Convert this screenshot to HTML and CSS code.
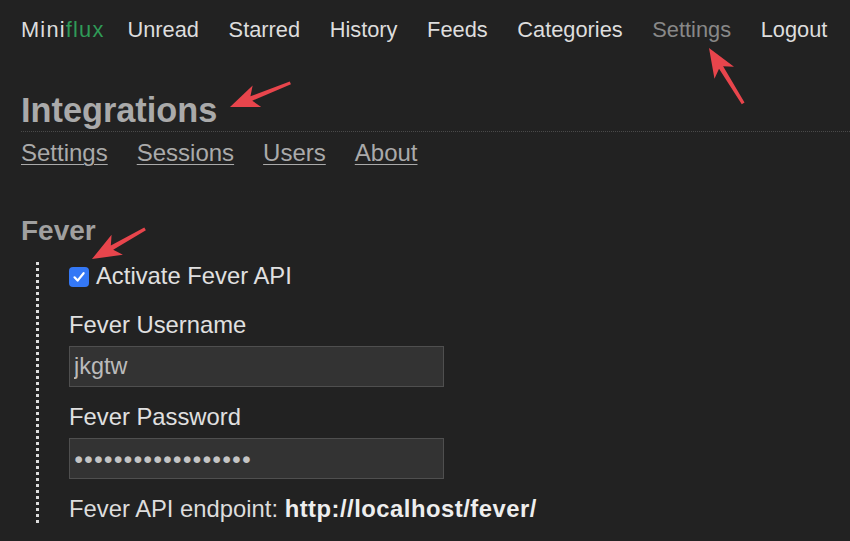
FILE: index.html
```html
<!DOCTYPE html>
<html lang="en">
<head>
<meta charset="utf-8">
<title>Integrations - Miniflux</title>
<link rel="stylesheet" href="styles.css">
</head>
<body>
<header class="top-nav">
  <a class="logo" href="#">Mini<span class="logo-flux">flux</span></a>
  <a class="nav-link" href="#">Unread</a>
  <a class="nav-link" href="#">Starred</a>
  <a class="nav-link" href="#">History</a>
  <a class="nav-link" href="#">Feeds</a>
  <a class="nav-link" href="#">Categories</a>
  <a class="nav-link active" href="#">Settings</a>
  <a class="nav-link" href="#">Logout</a>
</header>

<section class="page-header">
  <h1 class="page-title">Integrations</h1>
</section>
<nav class="sub-nav">
  <a href="#">Settings</a>
  <a href="#">Sessions</a>
  <a href="#">Users</a>
  <a href="#">About</a>
</nav>

<h3 class="section-title">Fever</h3>
<div class="fieldset">
  <label class="check-row">
    <span class="checkbox"><svg viewBox="0 0 20 20" width="20" height="20"><path d="M5.5 10.3 L8.6 13.6 L14.6 6.2" fill="none" stroke="#fff" stroke-width="2.2" stroke-linecap="round" stroke-linejoin="round"/></svg></span>
    <span>Activate Fever API</span>
  </label>
  <label class="field-label" for="fu">Fever Username</label>
  <input class="field-input" id="fu" type="text" value="jkgtw">
  <label class="field-label" for="fp">Fever Password</label>
  <div class="field-input password" id="fp">●●●●●●●●●●●●●●●●●●</div>
  <p class="endpoint">Fever API endpoint: <strong>http://localhost/fever/</strong></p>
</div>

<svg class="annotations" width="850" height="541" viewBox="0 0 850 541">
  <g transform="translate(709 48) rotate(-121.7)">
    <polygon points="0,0 -29,-11.5 -23,-2.4 -65,-1.6 -65,1.6 -23,2.4 -29,11.5" fill="#e8454c"/>
  </g>
  <g transform="translate(230 107) rotate(158.2)">
    <polygon points="0,0 -29,-11.5 -23,-2.4 -65,-1.6 -65,1.6 -23,2.4 -29,11.5" fill="#e8454c"/>
  </g>
  <g transform="translate(92 259) rotate(150.5)">
    <polygon points="0,0 -29,-11.5 -23,-2.4 -61,-1.6 -61,1.6 -23,2.4 -29,11.5" fill="#e8454c"/>
  </g>
</svg>
</body>
</html>
```

FILE: styles.css
```css
html, body {
  margin: 0;
  padding: 0;
}
body {
  background: #222;
  color: #ddd;
  font-family: "Liberation Sans", Arial, Helvetica, sans-serif;
  padding-left: 21px;
  height: 541px;
  overflow: hidden;
  position: relative;
}
a {
  text-decoration: none;
}

.top-nav {
  display: flex;
  align-items: baseline;
  padding-top: 17px;
  font-size: 21.8px;
  line-height: 26px;
  height: 26px;
}
.logo {
  color: #ddd;
  letter-spacing: 1.2px;
  margin-right: 23px;
}
.logo-flux {
  color: #2f9b57;
}
.nav-link {
  color: #ddd;
  margin-right: 29.6px;
}
.nav-link.active {
  color: #888;
}

.page-header {
  margin-top: 47px;
  border-bottom: 1px dotted #4a4a4a;
}
.page-title {
  margin: 0;
  font-size: 34.3px;
  line-height: 40.8px;
  font-weight: bold;
  color: #aaa;
}

.sub-nav {
  margin-top: 7px;
  display: flex;
  font-size: 24px;
  line-height: 28px;
}
.sub-nav a {
  color: #aaa;
  text-decoration: underline;
  text-underline-offset: 3px;
  text-decoration-thickness: 1px;
  margin-right: 29px;
}

.section-title {
  margin: 47px 0 0;
  font-size: 28px;
  line-height: 33.6px;
  font-weight: bold;
  color: #a0a0a0;
}

.fieldset {
  margin: 15px 0 0 15px;
  padding-left: 33px;
  background-image: repeating-linear-gradient(to bottom, #ddd 0 3px, transparent 3px 6px);
  background-size: 3px 100%;
  background-repeat: no-repeat;
  background-position: 0 0;
  height: 261px;
  font-size: 23.8px;
  line-height: 28px;
}

.check-row {
  display: flex;
  align-items: center;
  gap: 7px;
  color: #e0e0e0;
  height: 28px;
}
.checkbox {
  width: 20px;
  height: 20px;
  border-radius: 4px;
  background: #3478f6;
  display: block;
  margin-top: 2px;
}
.checkbox svg {
  display: block;
}

.field-label {
  display: block;
  color: #e0e0e0;
  margin-top: 21px;
}
.field-input {
  display: block;
  box-sizing: border-box;
  margin-top: 7px;
  width: 375px;
  height: 41px;
  background: #333;
  border: 1px solid #4f4f4f;
  color: #bbb;
  font-family: inherit;
  font-size: 23.4px;
  padding: 0 4px;
  outline: none;
}
.field-input + .field-label {
  margin-top: 16px;
}
.password {
  font-size: 15.5px;
  line-height: 39px;
  letter-spacing: 0.5px;
  padding-left: 4px;
  color: #c4c4c4;
}
.endpoint {
  margin: 16px 0 0;
  color: #ddd;
}
.endpoint strong {
  color: #eee;
  letter-spacing: 0.5px;
}

.annotations {
  position: absolute;
  left: 0;
  top: 0;
  pointer-events: none;
}
```
